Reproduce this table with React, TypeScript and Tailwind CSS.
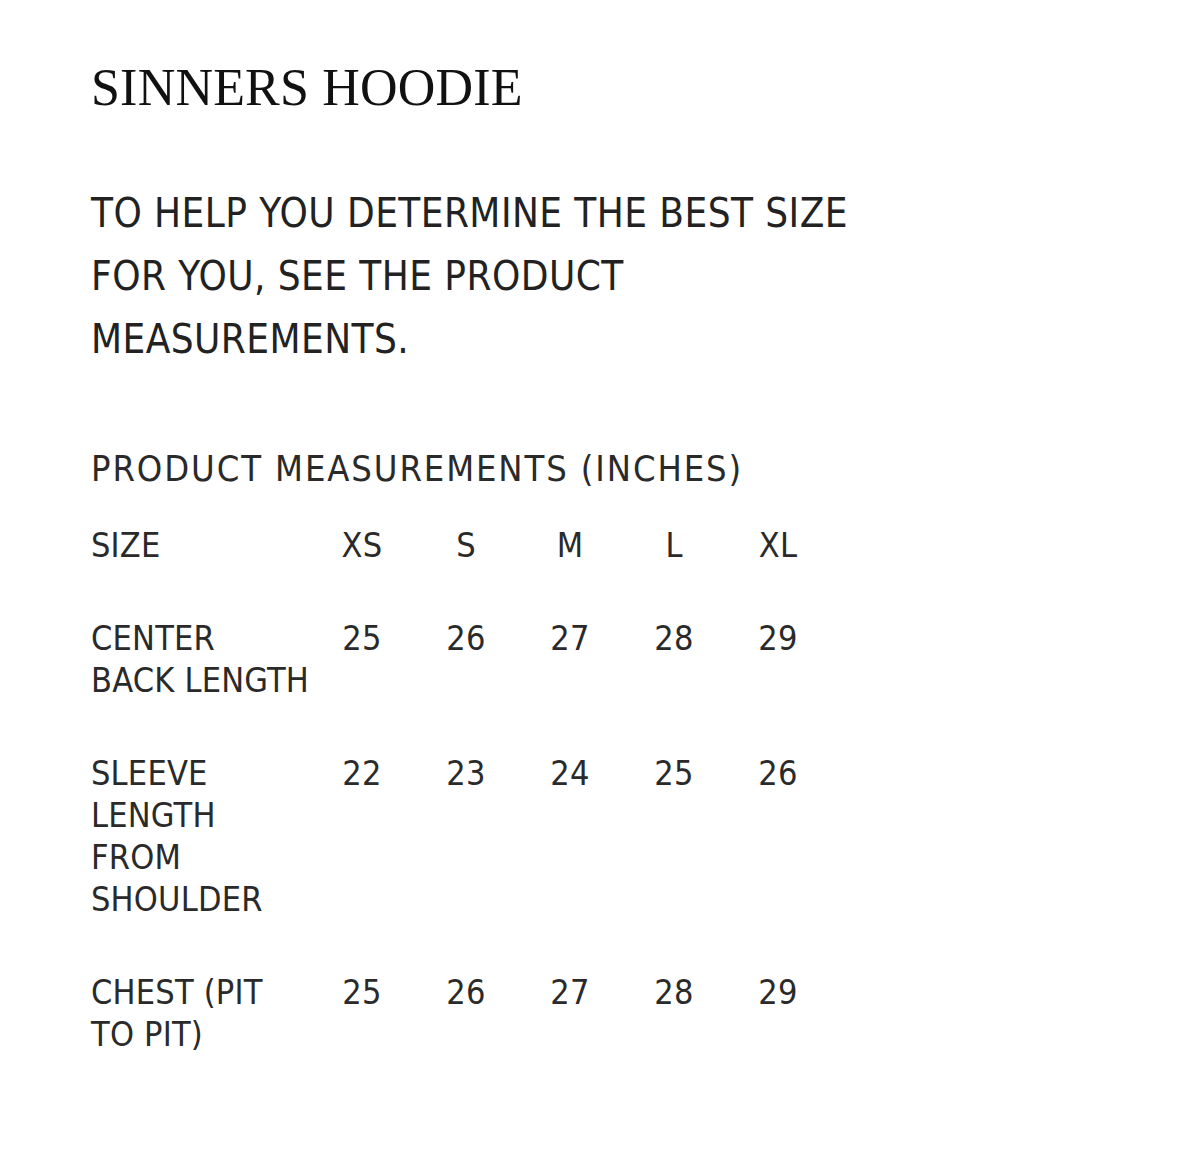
const narrow = "font-['Liberation_Sans_Narrow','DejaVu_Sans_Condensed','Liberation_Sans',sans-serif]";

const sizes = ["XS", "S", "M", "L", "XL"];

const rows: { label: string[]; values: number[] }[] = [
  { label: ["CENTER", "BACK LENGTH"], values: [25, 26, 27, 28, 29] },
  { label: ["SLEEVE", "LENGTH", "FROM", "SHOULDER"], values: [22, 23, 24, 25, 26] },
  { label: ["CHEST (PIT", "TO PIT)"], values: [25, 26, 27, 28, 29] },
];

function Row({ label, cells }: { label: string[]; cells: (string | number)[] }) {
  return (
    <div className="grid grid-cols-[219px_repeat(5,104px)] pb-[51px]">
      <div className="flex flex-col whitespace-nowrap">
        {label.map((line) => (
          <span key={line}>{line}</span>
        ))}
      </div>
      {cells.map((c, i) => (
        <span key={i} className="text-center">
          {c}
        </span>
      ))}
    </div>
  );
}

export default function App() {
  return (
    <div className="min-h-[1155px] w-[1179px] bg-white pl-[91px] pt-[61px] text-[#1c1c1c]">
      <h1 className="font-['Liberation_Serif',serif] text-[52px] leading-[53px] font-normal tracking-[0.2px] text-[#111]">
        SINNERS HOODIE
      </h1>

      <p className={`${narrow} mt-[68px] text-[40px] leading-[63px] tracking-[0.45px] text-[#222]`}>
        TO HELP YOU DETERMINE THE BEST SIZE
        <br />
        FOR YOU, SEE THE PRODUCT
        <br />
        MEASUREMENTS.
      </p>

      <h2 className={`${narrow} mt-[80px] text-[36px] leading-[36px] tracking-[1.9px] text-[#2a2a2a]`}>
        PRODUCT MEASUREMENTS (INCHES)
      </h2>

      <div className={`${narrow} mt-[37px] text-[34px] leading-[42px] tracking-[0.2px] text-[#2a2a2a]`}>
        <Row label={["SIZE"]} cells={sizes} />
        {rows.map((r) => (
          <Row key={r.label[0]} label={r.label} cells={r.values} />
        ))}
      </div>
    </div>
  );
}
